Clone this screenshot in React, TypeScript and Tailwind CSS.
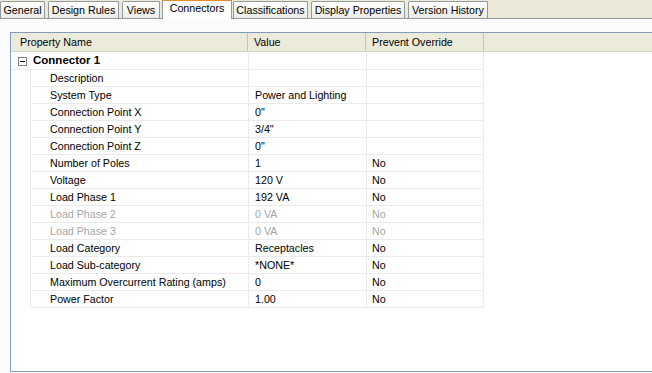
import React from 'react';

interface PropRow {
  name: string;
  value: string;
  override: string;
  disabled?: boolean;
}

// widths and left gaps measured off the tab strip
const tabs = [
  { label: 'General', w: 45, ml: 0 },
  { label: 'Design Rules', w: 71, ml: 3 },
  { label: 'Views', w: 38, ml: 3 },
  { label: 'Connectors', w: 70, ml: 2, active: true },
  { label: 'Classifications', w: 75, ml: 1 },
  { label: 'Display Properties', w: 94, ml: 3 },
  { label: 'Version History', w: 80, ml: 3 },
];

const rows: PropRow[] = [
  { name: 'Description', value: '', override: '' },
  { name: 'System Type', value: 'Power and Lighting', override: '' },
  { name: 'Connection Point X', value: '0"', override: '' },
  { name: 'Connection Point Y', value: '3/4"', override: '' },
  { name: 'Connection Point Z', value: '0"', override: '' },
  { name: 'Number of Poles', value: '1', override: 'No' },
  { name: 'Voltage', value: '120 V', override: 'No' },
  { name: 'Load Phase 1', value: '192 VA', override: 'No' },
  { name: 'Load Phase 2', value: '0 VA', override: 'No', disabled: true },
  { name: 'Load Phase 3', value: '0 VA', override: 'No', disabled: true },
  { name: 'Load Category', value: 'Receptacles', override: 'No' },
  { name: 'Load Sub-category', value: '*NONE*', override: 'No' },
  { name: 'Maximum Overcurrent Rating (amps)', value: '0', override: 'No' },
  { name: 'Power Factor', value: '1.00', override: 'No' },
];

const App: React.FC = () => {
  return (
    <div
      className="w-[652px] h-[373px] overflow-hidden bg-white text-[10.7px] text-black flex flex-col"
      style={{ fontFamily: '"Liberation Sans", Arial, sans-serif' }}
    >
      {/* Tabs */}
      <div className="h-[19px] bg-[#ece9d8] flex items-end border-b border-[#919b9c] shrink-0">
        {tabs.map(t =>
          t.active ? (
            <div
              key={t.label}
              className="h-[20px] -mb-px bg-white border border-b-0 border-[#919b9c] border-t-[#e68b2c] border-t-2 flex items-center justify-center"
              style={{ width: t.w, marginLeft: t.ml }}
            >
              <span className="-mt-[3px]">{t.label}</span>
            </div>
          ) : (
            <div
              key={t.label}
              className="h-[17px] bg-gradient-to-b from-white to-[#ecebe6] border border-b-0 border-[#919b9c] rounded-t-[2px] flex items-center justify-center"
              style={{ width: t.w, marginLeft: t.ml }}
            >
              {t.label}
            </div>
          )
        )}
      </div>

      {/* Panel */}
      <div className="flex-1 bg-[#fcfcfe] pl-[10px] pt-[13px] pb-[1px]">
        <div className="h-full border border-[#7f9db9] border-r-0 bg-white">
          {/* Header */}
          <div className="h-[19px] bg-[#ebeadb] border-b border-[#d6d2c2] flex">
            <div className="w-[237px] border-r border-[#c7c5b2] pl-[9px] pt-[1px] flex items-center">Property Name</div>
            <div className="w-[118px] border-r border-[#c7c5b2] pl-[6px] pt-[1px] flex items-center">Value</div>
            <div className="w-[118px] border-r border-[#c7c5b2] pl-[6px] pt-[1px] flex items-center">Prevent Override</div>
          </div>

          {/* Group row */}
          <div className="h-[17px] flex mt-[1px]">
            <div className="w-[237px] flex items-center pl-[7px] border-b border-[#ebebeb]">
              <div className="w-[9px] h-[9px] border border-[#808080] bg-white flex items-center justify-center mr-[6px]">
                <div className="w-[5px] h-px bg-black" />
              </div>
              <span className="font-bold text-[11.5px]">Connector 1</span>
            </div>
            <div className="w-[118px] border-l border-b border-[#ebebeb]" />
            <div className="w-[118px] border-l border-r border-b border-[#ebebeb]" />
          </div>

          {rows.map(r => (
            <div key={r.name} className={`h-[17px] flex ${r.disabled ? 'text-[#a6a6a6]' : ''}`}>
              <div className="w-[19px]" />
              <div className="w-[218px] border-l border-b border-[#ebebeb] pl-[19px] pt-[1px] flex items-center whitespace-nowrap">
                {r.name}
              </div>
              <div className="w-[118px] border-l border-b border-[#ebebeb] pl-[6px] pt-[1px] flex items-center">{r.value}</div>
              <div className="w-[118px] border-l border-r border-b border-[#ebebeb] pl-[5px] pt-[1px] flex items-center">{r.override}</div>
            </div>
          ))}
        </div>
      </div>
    </div>
  );
};

export default App;
